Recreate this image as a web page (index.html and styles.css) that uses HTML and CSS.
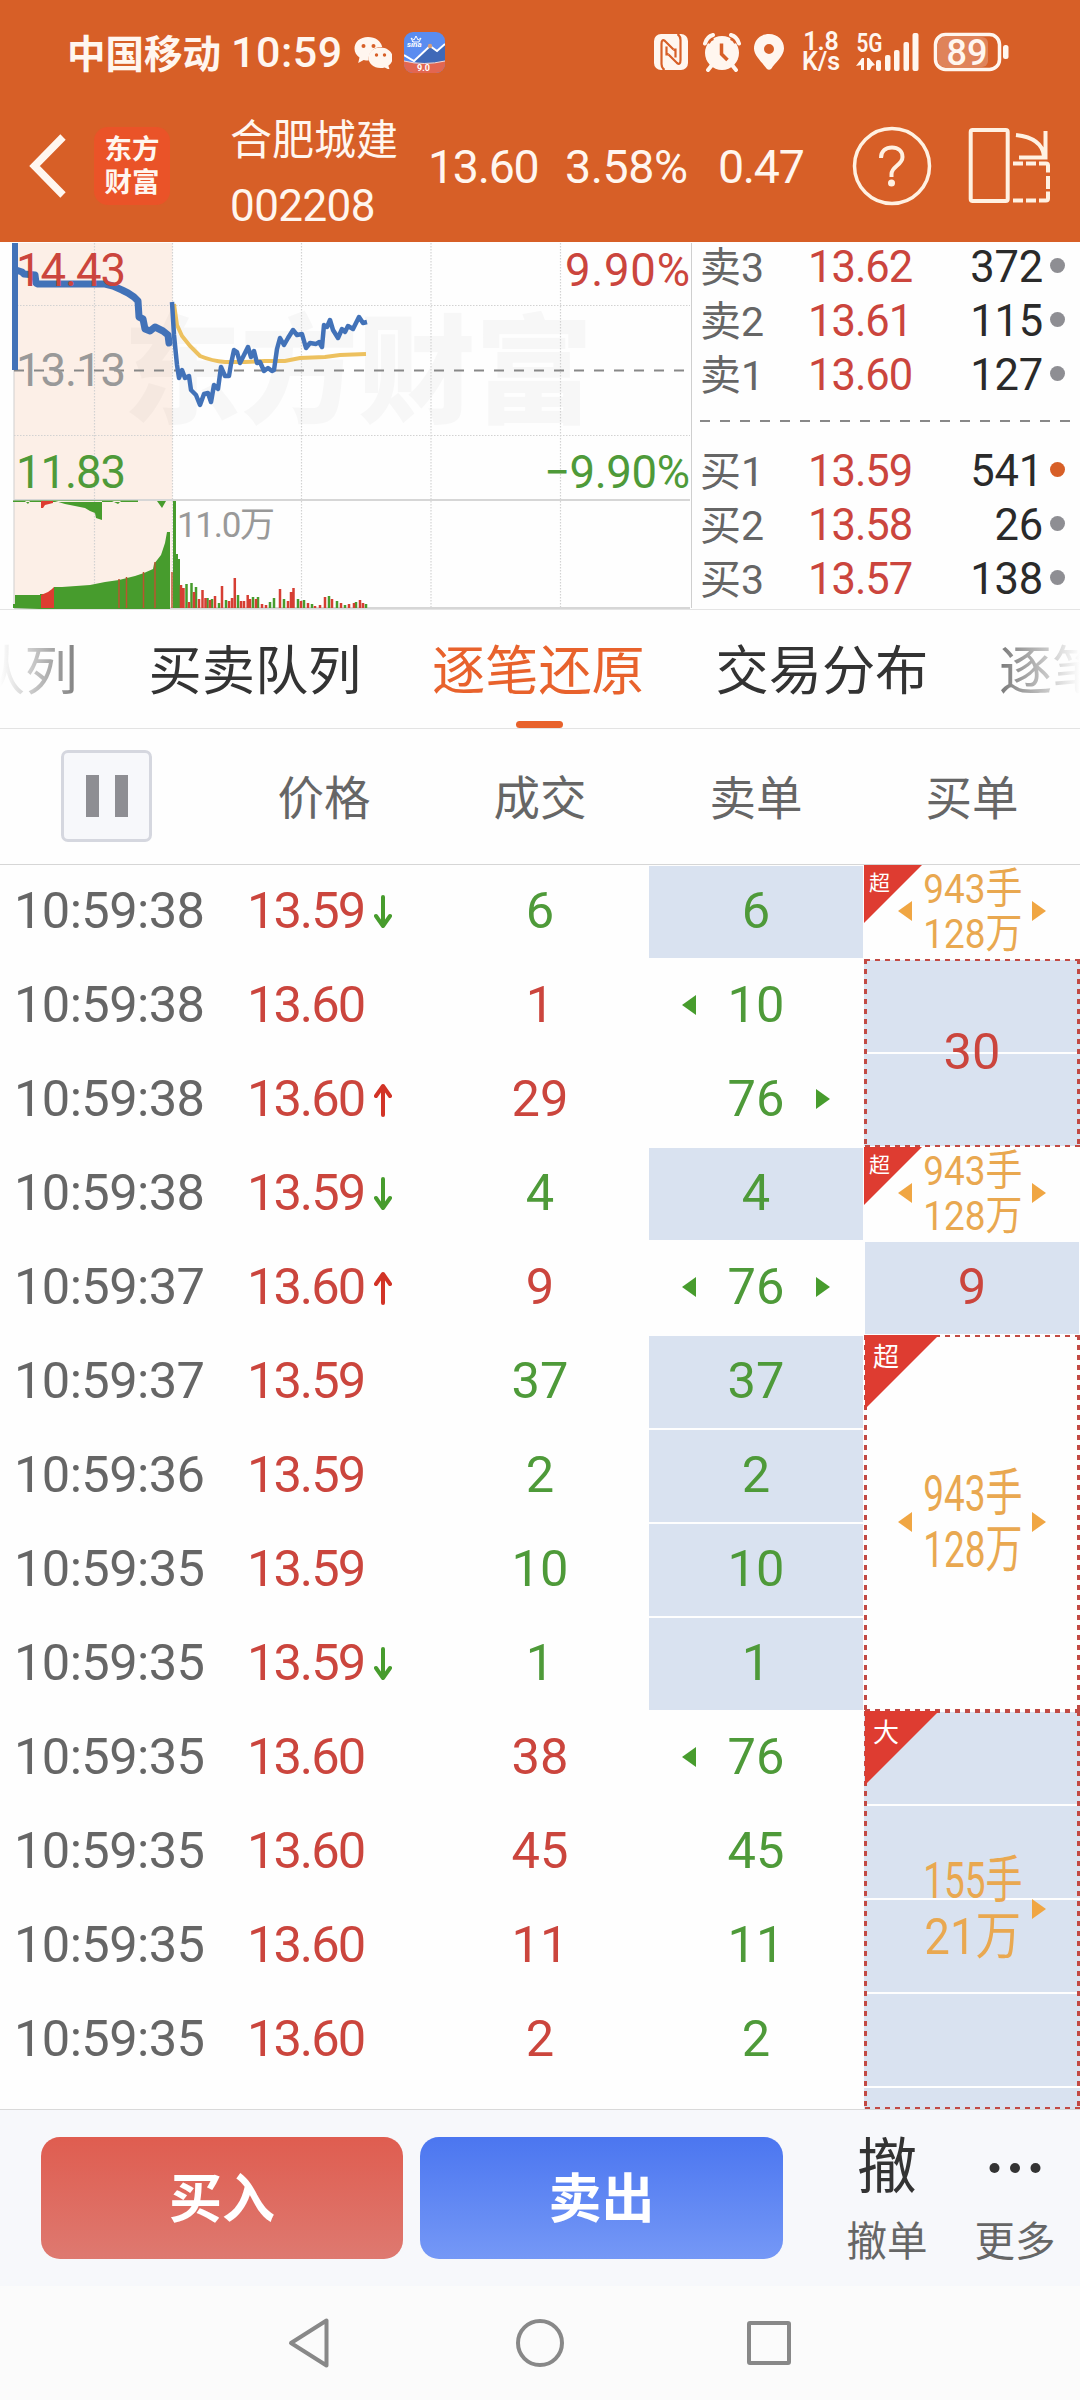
FILE: index.html
```html
<!DOCTYPE html>
<html lang="zh-CN">
<head>
<meta charset="utf-8">
<title>合肥城建 002208</title>
<link rel="stylesheet" href="styles.css">
</head>
<body>
<header class="top">
  <div class="status">
    <span class="carrier">中国移动</span>
    <span class="clock">10:59</span>
    <svg class="i-wechat" width="38" height="34" viewBox="354 34 38 34" fill="#fff6ef"><path d="M368 36c-8 0-13.500 5-13.500 11.500 0 4 2 7 5 9l-1.300 5.500 5.500-3a17 17 0 0 0 5 .6c-1-8 5-14 13.500-13.600C381 40 375.500 36 368 36z"/><path d="M380.500 46.500c-7 0-12 4.600-12 10.300s5 10.200 12 10.200c1.500 0 3-.2 4.200-.6l5 2.600-1.300-4.300c2.600-1.800 4.300-4.600 4.300-7.900 0-5.700-5.200-10.300-12.200-10.300z"/><g fill="#d75f27"><circle cx="363.500" cy="45" r="2"/><circle cx="373.500" cy="45" r="2"/><circle cx="376.500" cy="54" r="1.700"/><circle cx="384.500" cy="54" r="1.700"/></g></svg>
    <svg class="i-app" width="41" height="41" viewBox="0 0 41 41"><defs><clipPath id="app"><rect width="41" height="41" rx="9"/></clipPath></defs><g clip-path="url(#app)"><path fill="#5a8cf0" d="M0 0h41v41H0z"/><path fill="#3f69b8" d="M10 28 26 14l7 6 8-8v20H14z"/><path fill="#e26651" d="M0 29q20 6 41 0v12H0z"/><path d="M0 29q20 5 41 0" fill="none" stroke="#fbd9cf"/><path d="M0 23l10 6 16-15 7 5 8-7" fill="none" stroke="#fff" stroke-width="2"/><circle cx="26" cy="14" r="2.200" fill="#d9a07c"/><path d="M7 6l3 2 2-4 2 4 3-2-2 4h-6z" fill="none" stroke="#fff"/><text x="3" y="15" class="app-s">sina</text><text x="13" y="39" class="app-v">9.0</text></g></svg>
    <svg class="i-nfc" width="34" height="36" viewBox="0 0 34 36"><rect width="34" height="36" rx="7" fill="#fff6ef"/><path d="M10.500 36Q7.500 34 7.500 30V10Q7.500 4.500 11 7l8.500 8.500M23.500 0Q26.500 2 26.500 6v20q0 5.500-3.500 3L14.500 20.500" fill="none" stroke="#d75f27" stroke-width="2.200"/><path d="M12.200 34V12l9.600 9.500M21.800 2v22L12.200 14.500" fill="none" stroke="#d75f27" stroke-width="0"/><path d="M12.500 12.500v9M21.500 14.500v9M19.500 15.500l2 1M12.500 19.500l2 1" stroke="#d75f27" stroke-width="2.200"/></svg>
    <svg class="i-alarm" width="38" height="39" viewBox="0 0 38 39"><circle cx="19" cy="20" r="17" fill="#fff6ef"/><path d="M3 9.500Q5 4 10 3M28 3q5 1 7 6.500" stroke="#d75f27" stroke-width="8" fill="none"/><path d="M2 10.500Q4 3.500 10 2M28 2q6 1.500 8 8.500M9 32l-4 5M29 32l4 5" stroke="#fff6ef" stroke-width="4" stroke-linecap="round" fill="none"/><path d="M18.500 10.500v10.500l6 6" stroke="#d75f27" stroke-width="3.500" fill="none"/></svg>
    <svg class="i-pin" width="30" height="36" viewBox="0 0 30 36"><path d="M15 0C6 0 0 6.500 0 14.500 0 22 9 29 12.500 34.500q2.500 2.500 5 0C21 29 30 22 30 14.500 30 6.500 24 0 15 0zm0 10a5 5 0 1 1 0 10 5 5 0 0 1 0-10z" fill="#fff6ef"/></svg>
    <span class="speed"><b>1.8</b><b>K/s</b></span>
    <svg class="i-signal" width="64" height="48" viewBox="856 27 64 48" fill="#fff6ef"><text x="856.500" y="51" class="g5" textLength="26" lengthAdjust="spacingAndGlyphs">5G</text><rect x="876" y="59" width="5" height="11" rx="2"/><rect x="885" y="54" width="5.500" height="16" rx="2"/><rect x="894" y="49" width="5.500" height="21" rx="2"/><rect x="903.500" y="41" width="5.500" height="29" rx="2"/><rect x="912.500" y="32" width="6" height="38" rx="2"/><path d="M856 65l6-8h2v12h-3v-5zM867 69V57h2l6 7-3 1-2 4z"/></svg>
    <svg class="i-battery" width="76" height="40" viewBox="933 31 76 40"><rect x="938" y="36" width="50" height="30" rx="6" fill="#df835a"/><rect x="935.500" y="33.500" width="64" height="35" rx="10" fill="none" stroke="#fff6ef" stroke-width="3.500"/><rect x="1003" y="44" width="5.500" height="14" rx="2.500" fill="#fff6ef"/><text x="967" y="63.500" class="batt">89</text></svg>
  </div>
  <div class="titlebar">
    <svg class="back" width="38" height="66" viewBox="0 0 38 66"><path d="M34 4 5.500 33 34 62" fill="none" stroke="#fff6ef" stroke-width="7.500"/></svg>
    <div class="logo"><span>东方</span><span>财富</span></div>
    <div class="stock"><span class="name">合肥城建</span><span class="code">002208</span></div>
    <span class="q q1">13.60</span><span class="q q2">3.58%</span><span class="q q3">0.47</span>
    <svg class="help" width="80" height="80" viewBox="0 0 80 80"><circle cx="40" cy="40" r="37.500" fill="none" stroke="#fff1e2" stroke-width="3.500"/><path d="M29 32c0-7 5-10.500 11-10.500S50.500 25 50.500 31c0 8-11 9.500-11 17v3" fill="none" stroke="#fff1e2" stroke-width="4"/><circle cx="39.500" cy="57" r="3.500" fill="#fff1e2"/></svg>
    <svg class="rotate" width="82" height="78" viewBox="969 127 82 78" fill="none" stroke="#fff1e2" stroke-width="4"><rect x="971.700" y="130" width="37" height="71" rx="2"/><path d="M1017 135q26 3 28 21M1046.500 131v26.500H1020M1014 163.500h10M1027 163.500h10M1040 163.500h7q2 0 2 2v7M1049 176v13M1014 200.500h10M1027 200.500h10M1040 200.500h7q2 0 2-2v-7"/></svg>
  </div>
</header>

<section class="market">
  <svg class="chart" width="693" height="367" viewBox="0 242 693 367">
    <rect x="14" y="243" width="158.500" height="365" fill="#fcefe7"/>
    <text x="123" y="414" class="wm" textLength="470">东方财富</text>
    <g stroke="#d2d2d2" stroke-width="1.200" stroke-dasharray="1.500 1.500" fill="none"><path d="M94.500 243v365M172.500 243v365M301.500 243v365M431 243v365M560.500 243v365M14 305.500h676M14 435.500h676"/></g>
    <path d="M14 243v365M691.500 243v365" stroke="#cfcfcf" fill="none"/>
    <path d="M14 500h676M14 608h676" stroke="#d6d6d6" stroke-width="2"/>
    <path d="M14 370.500h676" stroke="#888" stroke-width="2.200" stroke-dasharray="10 10"/>
    <path d="M174 304L177 325 182 336 190 346 200 356Q212 361 225 362L245 362 265 361 285 361 300 358 325 357 340 355 366 354" fill="none" stroke="#edc15f" stroke-width="4"/>
    <path d="M15 243V370" stroke="#4272b8" stroke-width="6"/>
    <path d="M16 270L22 272 24 274 35 275 36 283 38 284H105L113 286 122 290 128 293 134 297 138 301 139 317 143 319 145 329 150 331 155 327 163 331 168 335 169 343" fill="none" stroke="#4272b8" stroke-width="7" stroke-linejoin="round" stroke-linecap="round"/>
    <path d="M172 302L174 335 177 365 179 378 182 370 185 378 189 376 191 390 196 395 200 405 204 394 208 393 211 402 214 385 218 389 221 367 225 376 229 376 231 364 234 350 237 352 240 363 244 355 248 347 251 357 254 351 257 363 260 362 264 371 268 368 272 371 274 370 277 349 280 338 284 345 288 338 293 330 297 335 302 334 306 348 310 343 316 344 319 342 322 347 324 325 327 327 330 320 333 330 338 338 342 329 345 332 348 326 353 329 359 317 363 323 367 322" fill="none" stroke="#4272b8" stroke-width="4.500" stroke-linejoin="round"/>
    <g fill="#479c2d"><path d="M13 608v-4h2v-9h25v-1h14v-7h8l28-2 15-3 14-2 16-4 9-3 9-4 1-5 7-9 4-12 2-11h3v82zM13 500.500h125v1.500H13zM55 501L65 504 75 506 85 508 90 511 95 513 96 518 102 520V501zM25 501l3 3 2-3zM112 501l6 3 3-3zM157 501l5 7 4-7zM173 501h3v53h2v5h2v49h-7z"/></g>
    <path d="M41 608v-13l7-3 4-3 2-2v21zM41 501h12v2l-8 2-2 3h-2z" fill="#de3c31"/>
    <path d="M119 608v-29M126.500 608v-31M143.500 608v-36M155 608v-46M172 608v-36" stroke="#b9552f" stroke-width="1.500"/>
    <path d="M186.500 608v-24M191.500 608v-25M196 608v-21M207.500 608v-10M212 608v-9M219 608v-5M226 608v-8M238 608v-13M253 608v-11M258 608v-11M270 608v-6M274 608v-10M284 608v-9M298 608v-9M304 608v-8M312 608v-4M329 608v-12M337 608v-7M345 608v-3M356 608v-6M366 608v-4" stroke="#479c2d" stroke-width="2.500"/>
    <path d="M181 608v-23M183.500 608v-20M189 608v-6M194 608v-16M199 608v-9M202.500 608v-18M205.500 608v-10M210 608v-8M215 608v-12M222 608v-22M229 608v-7M232 608v-10M234.800 608v-30M241 608v-7M244 608v-7M247.700 608v-13M250 608v-9M256 608v-9M262 608v-4M266 608v-3M280 608v-19M288 608v-7M291 608v-16M293.500 608v-20M301 608v-7M308 608v-5M315 608v-2M320 608v-3M325 608v-11M332 608v-9M341 608v-5M349 608v-4M354 608v-5M360 608v-8M363 608v-5" stroke="#d63e33" stroke-width="2.500"/>
    <text x="16" y="286" class="ax red" textLength="110">14.43</text>
    <text x="16" y="386" class="ax gray" textLength="110">13.13</text>
    <text x="16" y="488" class="ax green" textLength="110">11.83</text>
    <text x="565" y="286" class="ax red" textLength="125">9.90%</text>
    <text x="544" y="488" class="ax green" textLength="146">−9.90%</text>
    <text x="177" y="537" class="vol" textLength="98">11.0万</text>
  </svg>
  <div class="book">
    <div class="lv"><span>卖3</span><b>13.62</b><em>372</em><i></i></div>
    <div class="lv"><span>卖2</span><b>13.61</b><em>115</em><i></i></div>
    <div class="lv"><span>卖1</span><b>13.60</b><em>127</em><i></i></div>
    <div class="sep"></div>
    <div class="lv"><span>买1</span><b>13.59</b><em>541</em><i class="hot"></i></div>
    <div class="lv"><span>买2</span><b>13.58</b><em>26</em><i></i></div>
    <div class="lv"><span>买3</span><b>13.57</b><em>138</em><i></i></div>
  </div>
</section>

<nav class="tabs"><span>千档队列</span><span>买卖队列</span><span class="on">逐笔还原</span><span>交易分布</span><span>逐笔成交</span></nav>

<div class="thead"><div><span class="pause"><i></i><i></i></span></div><div>价格</div><div>成交</div><div>卖单</div><div>买单</div></div>

<main class="trades">
  <div class="list">
    <div class="row"><time>10:59:38</time><b>13.59<svg class="ar dn" viewBox="0 0 18 34"><path d="M9 2v29M2 21l7 10 7-10"/></svg></b><em class="g">6</em><span class="s fill">6</span></div>
    <div class="row"><time>10:59:38</time><b>13.60</b><em>1</em><span class="s l">10</span></div>
    <div class="row"><time>10:59:38</time><b>13.60<svg class="ar" viewBox="0 0 18 34"><path d="M9 32V4M2 13l7-10 7 10"/></svg></b><em>29</em><span class="s r">76</span></div>
    <div class="row"><time>10:59:38</time><b>13.59<svg class="ar dn" viewBox="0 0 18 34"><path d="M9 2v29M2 21l7 10 7-10"/></svg></b><em class="g">4</em><span class="s fill">4</span></div>
    <div class="row"><time>10:59:37</time><b>13.60<svg class="ar" viewBox="0 0 18 34"><path d="M9 32V4M2 13l7-10 7 10"/></svg></b><em>9</em><span class="s l r">76</span></div>
    <div class="row"><time>10:59:37</time><b>13.59</b><em class="g">37</em><span class="s fill">37</span></div>
    <div class="row"><time>10:59:36</time><b>13.59</b><em class="g">2</em><span class="s fill">2</span></div>
    <div class="row"><time>10:59:35</time><b>13.59</b><em class="g">10</em><span class="s fill">10</span></div>
    <div class="row"><time>10:59:35</time><b>13.59<svg class="ar dn" viewBox="0 0 18 34"><path d="M9 2v29M2 21l7 10 7-10"/></svg></b><em class="g">1</em><span class="s fill">1</span></div>
    <div class="row"><time>10:59:35</time><b>13.60</b><em>38</em><span class="s l">76</span></div>
    <div class="row"><time>10:59:35</time><b>13.60</b><em>45</em><span class="s">45</span></div>
    <div class="row"><time>10:59:35</time><b>13.60</b><em>11</em><span class="s">11</span></div>
    <div class="row"><time>10:59:35</time><b>13.60</b><em>2</em><span class="s">2</span></div>
  </div>
  <div class="buys">
    <div class="buy n1 l r"><div class="tag">超</div><div class="amt"><span>943手</span><span>128万</span></div></div>
    <div class="buy n2 fill dash">30</div>
    <div class="buy n1 l r"><div class="tag">超</div><div class="amt"><span>943手</span><span>128万</span></div></div>
    <div class="buy n1 fill">9</div>
    <div class="buy n4 l r dash"><div class="tag big">超</div><div class="amt tall"><span>943手</span><span>128万</span></div></div>
    <div class="buy n5 fill r dash last"><div class="tag big">大</div><div class="amt tall"><span>155手</span><span class="wide">21万</span></div></div>
  </div>
</main>

<footer class="actions">
  <div class="btn buyin">买入</div><div class="btn sell">卖出</div>
  <div class="act a1"><b>撤</b><span>撤单</span></div>
  <div class="act a2"><svg width="60" height="72" viewBox="0 0 60 72" fill="#333"><circle cx="9.500" cy="36" r="5"/><circle cx="30" cy="36" r="5"/><circle cx="50.500" cy="36" r="5"/></svg><span>更多</span></div>
</footer>
<div class="sysnav">
  <svg width="44" height="52" viewBox="0 0 44 52"><path d="M39.500 3.500v45L4 26z"/></svg>
  <svg width="50" height="50" viewBox="0 0 50 50"><circle cx="25" cy="25" r="22"/></svg>
  <svg width="44" height="46" viewBox="0 0 44 46"><rect x="2" y="3" width="40" height="40" rx="1"/></svg>
</div>
</body>
</html>
```
FILE: styles.css
```css
* { box-sizing: border-box; }
body {
  margin: 0; width: 1080px; height: 2400px; overflow: hidden; background: #fefefe;
  font-family: Roboto, "Noto Sans CJK SC", sans-serif; color: #333;
  display: flex; flex-direction: column;
}
b, em, i { font-style: normal; font-weight: 400; }
svg { display: block; flex: none; }

.top { height: 242px; background: #d75f27; color: #fff6ef; flex: none; }
.status { height: 104px; display: flex; align-items: center; padding-left: 67px; white-space: nowrap; }
.carrier { font-size: 38.500px; font-weight: 700; width: 164px; margin-top: -3px; }
.clock { font-size: 43px; font-weight: 500; width: 123px; letter-spacing: .5px; }
.i-app { margin-left: 12px; }
.app-s { font: italic 700 8px Roboto, sans-serif; fill: #fff; }
.app-v { font: 700 9px Roboto, sans-serif; fill: #fff; }
.i-nfc { margin-left: 209px; }
.i-alarm { margin-left: 15px; }
.i-pin { margin-left: 13px; }
.speed { display: flex; flex-direction: column; align-items: center; width: 40px; margin-left: 17px; }
.speed b { font-size: 25px; line-height: 20.500px; font-weight: 600; }
.i-signal { margin-left: 15px; }
.g5 { font: 600 26px Roboto, sans-serif; }
.i-battery { margin-left: 13px; }
.batt { font: 500 36px Roboto, sans-serif; fill: #fff6ef; text-anchor: middle; }

.titlebar { height: 138px; display: flex; align-items: center; padding: 0 0 14px 29px; }
.logo {
  width: 76px; height: 78px; margin-left: 27px; border-radius: 14px; background: #ea5328;
  display: flex; flex-direction: column; align-items: center; justify-content: center;
}
.logo span { font-size: 27.500px; line-height: 33.500px; font-weight: 700; }
.stock { display: flex; flex-direction: column; margin: 16px 0 0 60px; width: 198px; }
.name { font-size: 42px; line-height: 64px; }
.code { font-size: 44px; line-height: 66px; letter-spacing: -.6px; }
.q { font-size: 46.500px; letter-spacing: -1.300px; padding-top: 1px; }
.q1 { width: 137px; }
.q2 { width: 153px; letter-spacing: -.4px; }
.q3 { width: 134px; }
.rotate { margin-left: 36px; }

.market { height: 368px; display: flex; border-bottom: 1px solid #e4e4e4; flex: none; }
.wm { font: 900 118px "Noto Sans CJK SC", sans-serif; fill: #000; fill-opacity: .028; }
.ax { font-size: 45.500px; }
.red { fill: #cb453d; }
.gray { fill: #999; }
.green { fill: #4e9a39; }
.vol { font-size: 35px; fill: #999; }
.book { flex: 1; padding: 0 0 0 7px; display: flex; flex-direction: column; }
.lv { height: 54px; display: flex; align-items: center; font-size: 43.500px; line-height: 50px; padding-bottom: 2px; }
.lv span { width: 108px; color: #666; font-size: 41px; }
.lv b { width: 131px; color: #cb453d; letter-spacing: -1px; }
.lv em { width: 104px; text-align: right; color: #2a2a2a; letter-spacing: -.2px; }
.lv i { width: 15px; height: 15px; border-radius: 50%; background: #8e8e93; margin: -5px 0 0 7px; }
.lv i.hot { background: #d75f27; }
.sep { height: 2px; width: 372px; margin: 16px 0 24px; background: repeating-linear-gradient(90deg, #888 0 10px, transparent 10px 20px); }

.tabs {
  height: 119px; border-bottom: 1px solid #e3e3e3; display: flex; gap: 70.500px; flex: none;
  overflow: hidden; position: relative; white-space: nowrap;
}
.tabs span { font-size: 53.200px; line-height: 124px; width: 213px; flex: none; }
.tabs span:first-child { margin-left: -135px; }
.tabs .on { color: #e8622c; position: relative; }
.tabs .on::after { content: ""; position: absolute; left: 84px; bottom: 0; width: 47px; height: 7px; border-radius: 4px; background: #e8622c; }
.tabs::before, .tabs::after { content: ""; position: absolute; top: 0; width: 86px; height: 118px; z-index: 1; }
.tabs::before { left: 0; background: linear-gradient(90deg, #fefefe, rgba(254, 254, 254, .3)); }
.tabs::after { right: 0; background: linear-gradient(270deg, #fefefe, rgba(254, 254, 254, .3)); }

.thead { height: 136px; border-bottom: 1px solid #d6d6d6; display: grid; grid-template-columns: repeat(5, 216px); flex: none; font-size: 46.500px; line-height: 140px; text-align: center; color: #666; }
.pause { display: flex; width: 91px; height: 92px; margin: 21px 0 0 61px; border: 3px solid #d5d7df; border-radius: 7px; background: #f7f8fb; justify-content: center; align-items: center; gap: 16px; }
.pause i { width: 13px; height: 42px; background: #8e8e93; }

.trades { height: 1244px; display: flex; flex: none; font-size: 50.600px; }
.list { width: 864px; }
.row { height: 94px; display: grid; grid-template-columns: 247px 185px 216px 216px; line-height: 91px; }
.row time { padding-left: 14px; color: #666; letter-spacing: -.6px; }
.row b { color: #cb453d; letter-spacing: -2px; display: flex; }
.row em { text-align: center; color: #cb453d; }
.row em.g { color: #4e9a39; }
.ar { width: 18px; height: 34px; margin: 30px 0 0 10px; fill: none; stroke: #d23326; stroke-width: 4; stroke-linecap: round; stroke-linejoin: round; }
.dn { stroke: #479c2d; }
.s { position: relative; color: #4e9a39; text-align: center; margin: 1px; line-height: 89px; }
.fill { background: #d9e2f0; }
.l::before, .r::after { content: ""; position: absolute; top: 50%; margin-top: -11px; border: 10px solid transparent; }
.l::before { left: 33px; border-right: 14px solid #479c2d; border-left: 0; }
.r::after { right: 33px; border-left: 14px solid #479c2d; border-right: 0; }
.buys { width: 216px; }
.buy { position: relative; color: #cb453d; display: flex; align-items: center; justify-content: center; line-height: 60px; padding-bottom: 3px; }
.n1 { height: 94px; }
.n2 { height: 188px; }
.n4 { height: 376px; }
.n5 { height: 398px; }
.buy.fill { background: repeating-linear-gradient(#fefefe 0 1px, #d9e2f0 1px 93px, #fefefe 93px 94px); border: solid #fefefe; border-width: 0 1px; }
.buy.l::before { left: 34px; border-right-color: #f0a643; z-index: 1; }
.buy.r::after { right: 34px; border-left-color: #f0a643; z-index: 1; }
.dash { --v: repeating-linear-gradient(#c24a44 0 5px, transparent 5px 10px); --h: repeating-linear-gradient(90deg, #c24a44 0 5px, transparent 5px 10px); }
.buy.dash { border: 0; background: var(--h) 1px 0 / 100% 2px no-repeat, var(--h) 1px 100% / 100% 2px no-repeat, var(--v) 0 0 / 3px 100% no-repeat, var(--v) 100% 0 / 3px 100% no-repeat; }
.buy.dash.fill { background: var(--h) 1px 0 / 100% 2px no-repeat, var(--h) 1px 100% / 100% 2px no-repeat, var(--v) 0 0 / 3px 100% no-repeat, var(--v) 100% 0 / 3px 100% no-repeat, repeating-linear-gradient(#fefefe 0 1px, #d9e2f0 1px 93px, #fefefe 93px 94px); }
.tag { position: absolute; left: 0; top: 0; width: 58px; height: 58px; background: #de3c31; clip-path: polygon(0 0, 100% 0, 0 100%); color: #fff; font-size: 21px; line-height: 36px; padding-left: 5px; }
.tag.big { width: 74px; height: 74px; font-size: 26px; line-height: 45px; padding-left: 8px; left: 1px; }
.amt { display: flex; flex-direction: column; align-items: center; color: #e9a850; font-size: 41.500px; padding: 1px 0 0 2px; }
.amt span { line-height: 45px; transform: scaleX(.89); }
.amt.tall span { font-size: 50.600px; line-height: 56px; transform: scaleX(.73); }
.amt.tall .wide { transform: scaleX(.9); }

.actions { height: 177px; border-top: 1px solid #d9d9d9; background: #f7f8fb; display: flex; flex: none; padding: 27px 0 0 41px; }
.btn { width: 362px; height: 122px; border-radius: 19px; color: #fff; font-size: 53px; font-weight: 700; line-height: 126px; text-align: center; margin-right: 17px; }
.buyin { background: linear-gradient(#df5d50, #de7970); }
.sell { background: linear-gradient(#4b76f0, #7598f6); width: 363px; }
.act { width: 82px; display: flex; flex-direction: column; align-items: center; color: #666; font-size: 40.500px; line-height: 76px; margin-top: -5px; white-space: nowrap; }
.act b { font-size: 60px; line-height: 72px; color: #333; }
.a1 { margin-left: 46px; }
.a2 { margin-left: 46px; }
.sysnav { height: 114px; background: #fbfbfb; display: flex; flex: none; align-items: center; padding-left: 287px; fill: none; stroke: #888; stroke-width: 4; stroke-linejoin: round; }
.sysnav svg:nth-child(2) { margin-left: 184px; }
.sysnav svg:nth-child(3) { margin-left: 182px; }
```
